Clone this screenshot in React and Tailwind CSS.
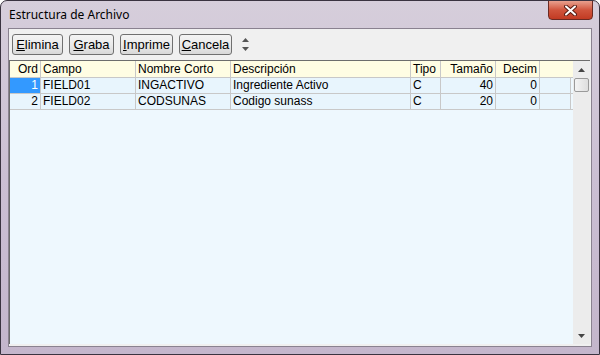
import { useState } from 'react'

const columns = [
  { key: 'ord', label: 'Ord', width: 'w-[31px]', align: 'text-right' },
  { key: 'campo', label: 'Campo', width: 'w-[95px]', align: 'text-left' },
  { key: 'corto', label: 'Nombre Corto', width: 'w-[95px]', align: 'text-left' },
  { key: 'desc', label: 'Descripción', width: 'w-[180px]', align: 'text-left' },
  { key: 'tipo', label: 'Tipo', width: 'w-[30px]', align: 'text-left' },
  { key: 'tam', label: 'Tamaño', width: 'w-[55px]', align: 'text-right' },
  { key: 'dec', label: 'Decim', width: 'w-[44px]', align: 'text-right' },
]

const rows = [
  { ord: 1, campo: 'FIELD01', corto: 'INGACTIVO', desc: 'Ingrediente Activo', tipo: 'C', tam: 40, dec: 0 },
  { ord: 2, campo: 'FIELD02', corto: 'CODSUNAS', desc: 'Codigo sunass', tipo: 'C', tam: 20, dec: 0 },
]

function ToolButton({ hot, rest, width }) {
  return (
    <button
      className={`${width} h-[21px] rounded-[3px] border border-[#707070] bg-gradient-to-b from-[#f4f4f4] via-[#ebebeb] to-[#d8d8d8] text-center text-[13px] leading-none text-black`}
    >
      <span className="underline">{hot}</span>
      {rest}
    </button>
  )
}

export default function App() {
  const [selected] = useState(0)

  return (
    <div
      className="flex h-[355px] w-[600px] flex-col overflow-hidden rounded-t-[7px] border border-[#3a3340] bg-gradient-to-b from-[#d6cedb] via-[#cbbfd3] to-[#c4b6cc]"
      style={{ fontFamily: '"Liberation Sans", Arial, sans-serif' }}
    >
      {/* title bar */}
      <div className="relative flex h-[27px] shrink-0 items-center pl-[8px]">
        <span className="text-[12px] text-black" style={{ fontFamily: '"Noto Sans", "DejaVu Sans", sans-serif' }}>
          Estructura de Archivo
        </span>
        <div className="absolute right-[6px] top-[-1px] flex h-[20px] w-[45px] items-center justify-center rounded-b-[4px] border border-[#6b2a22] bg-gradient-to-b from-[#e8a08e] via-[#d0543c] to-[#c23a22]">
          <svg width="13" height="11" viewBox="0 0 13 11">
            <path d="M2 1.5 L11 9.5 M11 1.5 L2 9.5" stroke="#5a1d14" strokeWidth="4" strokeLinecap="round" />
            <path d="M2 1.5 L11 9.5 M11 1.5 L2 9.5" stroke="#ffffff" strokeWidth="2" strokeLinecap="round" />
          </svg>
        </div>
      </div>

      {/* client area */}
      <div className="mx-[7px] mb-[7px] flex flex-1 flex-col border border-[#8a8290] bg-[#f0f0f0]">
        <div className="flex h-[31px] shrink-0 items-center gap-[6px] pl-[3px]">
          <ToolButton hot="E" rest="limina" width="w-[51px]" />
          <ToolButton hot="G" rest="raba" width="w-[45px]" />
          <ToolButton hot="I" rest="mprime" width="w-[53px]" />
          <ToolButton hot="C" rest="ancela" width="w-[53px]" />
          <div className="ml-[4px] flex flex-col items-center gap-[5px]">
            <svg width="7" height="4" viewBox="0 0 7 4"><path d="M0 4 L3.5 0 L7 4 Z" fill="#555" /></svg>
            <svg width="7" height="4" viewBox="0 0 7 4"><path d="M0 0 L3.5 4 L7 0 Z" fill="#555" /></svg>
          </div>
        </div>

        {/* grid */}
        <div className="mb-[2px] mr-[1px] flex flex-1 border-l border-t border-[#6d6d6d] bg-[#eef8fe]">
          <div className="flex flex-1 flex-col">
            <div className="flex h-[17px] border-b border-[#c8c8c8] bg-[#fffde3] text-[12px] leading-[16px] text-black">
              {columns.map((c) => (
                <div key={c.key} className={`${c.width} ${c.align} shrink-0 border-r border-[#c8c8c8] px-[2px]`}>
                  {c.label}
                </div>
              ))}
              <div className="flex-1" />
            </div>
            {rows.map((r, i) => (
              <div key={r.ord} className="flex h-[16px] border-b border-[#c8c8c8] bg-[#e8f5fd] text-[12px] leading-[15px] text-black">
                {columns.map((c) => (
                  <div
                    key={c.key}
                    className={`${c.width} ${c.align} shrink-0 border-r border-[#c8c8c8] px-[2px] ${
                      c.key === 'ord' && i === selected ? 'bg-[#3399ff] text-white' : ''
                    }`}
                  >
                    {r[c.key]}
                  </div>
                ))}
                <div className="w-[31px] shrink-0 border-r border-[#c8c8c8]" />
                <div className="flex-1 bg-[#eef8fe]" />
              </div>
            ))}
          </div>

          {/* scrollbar */}
          <div className="flex w-[17px] shrink-0 flex-col items-center bg-[#ececec]">
            <div className="flex h-[17px] w-full items-center justify-center">
              <svg width="7" height="4" viewBox="0 0 7 4"><path d="M0 4 L3.5 0 L7 4 Z" fill="#444" /></svg>
            </div>
            <div className="h-[14px] w-[15px] rounded-[2px] border border-[#9a9a9a] bg-gradient-to-r from-[#f4f4f4] to-[#dedede]" />
            <div className="flex-1" />
            <div className="flex h-[17px] w-full items-center justify-center">
              <svg width="7" height="4" viewBox="0 0 7 4"><path d="M0 0 L3.5 4 L7 0 Z" fill="#444" /></svg>
            </div>
          </div>
        </div>
      </div>
    </div>
  )
}
